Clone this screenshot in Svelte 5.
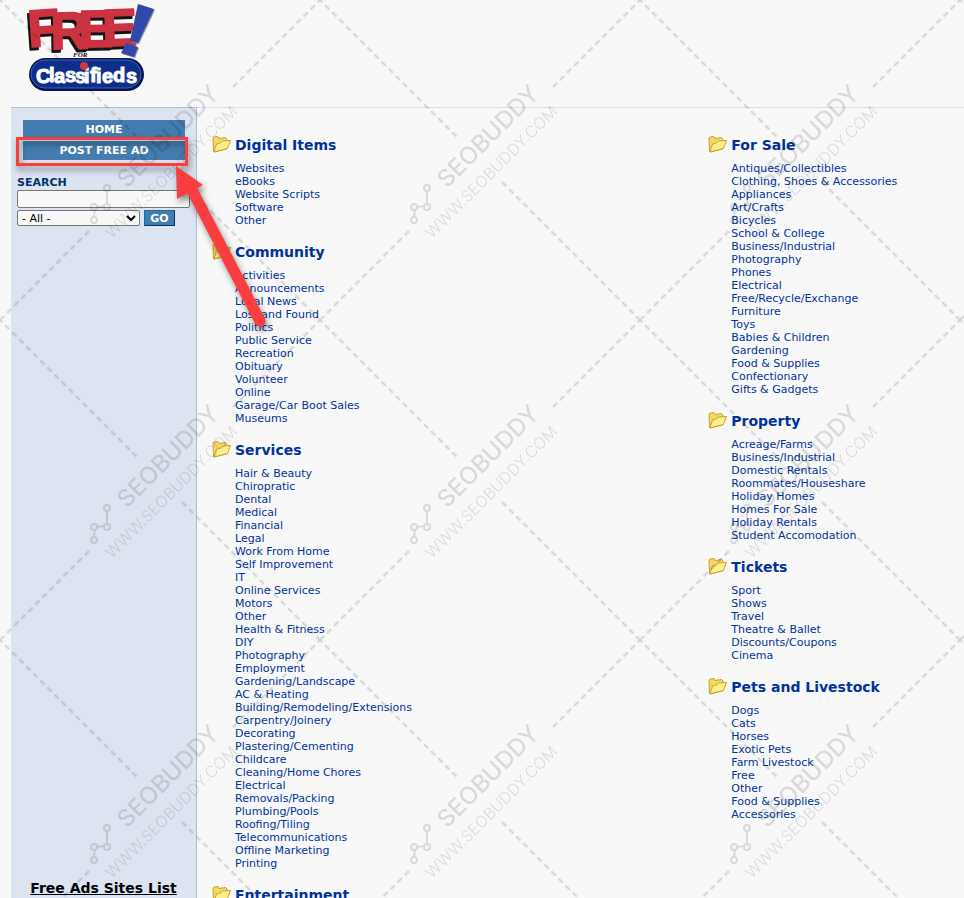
<script>
  const left = [
    { title: 'Digital Items', items: ['Websites', 'eBooks', 'Website Scripts', 'Software', 'Other'] },
    { title: 'Community', items: ['Activities', 'Announcements', 'Local News', 'Lost and Found', 'Politics', 'Public Service', 'Recreation', 'Obituary', 'Volunteer', 'Online', 'Garage/Car Boot Sales', 'Museums'] },
    { title: 'Services', items: ['Hair & Beauty', 'Chiropratic', 'Dental', 'Medical', 'Financial', 'Legal', 'Work From Home', 'Self Improvement', 'IT', 'Online Services', 'Motors', 'Other', 'Health & Fitness', 'DIY', 'Photography', 'Employment', 'Gardening/Landscape', 'AC & Heating', 'Building/Remodeling/Extensions', 'Carpentry/Joinery', 'Decorating', 'Plastering/Cementing', 'Childcare', 'Cleaning/Home Chores', 'Electrical', 'Removals/Packing', 'Plumbing/Pools', 'Roofing/Tiling', 'Telecommunications', 'Offline Marketing', 'Printing'] },
    { title: 'Entertainment', items: [] },
  ];
  const right = [
    { title: 'For Sale', items: ['Antiques/Collectibles', 'Clothing, Shoes & Accessories', 'Appliances', 'Art/Crafts', 'Bicycles', 'School & College', 'Business/Industrial', 'Photography', 'Phones', 'Electrical', 'Free/Recycle/Exchange', 'Furniture', 'Toys', 'Babies & Children', 'Gardening', 'Food & Supplies', 'Confectionary', 'Gifts & Gadgets'] },
    { title: 'Property', items: ['Acreage/Farms', 'Business/Industrial', 'Domestic Rentals', 'Roommates/Houseshare', 'Holiday Homes', 'Homes For Sale', 'Holiday Rentals', 'Student Accomodation'] },
    { title: 'Tickets', items: ['Sport', 'Shows', 'Travel', 'Theatre & Ballet', 'Discounts/Coupons', 'Cinema'] },
    { title: 'Pets and Livestock', items: ['Dogs', 'Cats', 'Horses', 'Exotic Pets', 'Farm Livestock', 'Free', 'Other', 'Food & Supplies', 'Accessories'] },
  ];
  const columns = [left, right];
</script>

<div class="page">
  <header>
    <a class="logo" href="#home" aria-label="Free for Classifieds">
      <svg width="136" height="96" viewBox="20 0 136 96">
        <text class="free" x="29 51 79 103" y="47 49 47 46" rotate="-4 -1 -1 -2">FREE</text>
        <g class="bang" fill="#3049a8">
          <path d="M138 4L154 9L138 43L130 41Z" />
          <path d="M126 43L138 47L134 57L121 53Z" />
        </g>
        <text class="for" x="73" y="57">FOR</text>
        <rect x="29" y="58" width="115" height="33" rx="16.5" fill="#0a1550" />
        <rect x="31" y="60" width="110" height="28" rx="14" fill="#0c2f8c" stroke="#3c62b4" />
        <text class="classifieds" x="36 49 54 65 75 84 90 96 102 113 126" y="83 82 83 82 83 83 82 83 83 82 83">Classifieds</text>
        <circle cx="84" cy="66" r="4" fill="#d0383e" />
      </svg>
    </a>
  </header>

  <div class="body">
    <aside>
      <nav>
        <a href="#home">HOME</a>
        <a href="#post">POST FREE AD</a>
      </nav>
      <form onsubmit={(e) => e.preventDefault()}>
        <label for="q">SEARCH</label>
        <input id="q" type="text" />
        <div class="row">
          <select aria-label="Category"><option>- All -</option></select>
          <button>GO</button>
        </div>
      </form>
      <a class="sites" href="#sites">Free Ads Sites List</a>
    </aside>

    <main>
      {#each columns as column}
        <div class="column">
          {#each column as group}
            <section>
              <svg class="folder" width="19" height="17" viewBox="0 0 19 17" aria-hidden="true">
                <path d="M1.500 15.500L1 2L2 1L6 .5L7 2.500L13.500 1.500L15 3L14.500 13L2 16Z" fill="#f3d766" stroke="#cfa02c" />
                <path d="M2 16L4.500 8L8.500 7L10.500 5L18.500 4.500L15.500 12.500Z" fill="#fcf08e" stroke="#cfa02c" stroke-linejoin="round" />
              </svg>
              <h2><a href="#category">{group.title}</a></h2>
              {#if group.items.length}
                <ul>
                  {#each group.items as item}
                    <li><a href="#category">{item}</a></li>
                  {/each}
                </ul>
              {/if}
            </section>
          {/each}
        </div>
      {/each}
    </main>
  </div>

  <svg class="watermark" aria-hidden="true">
    <defs>
      <pattern id="mark" width="320" height="320" patternUnits="userSpaceOnUse">
        <g fill="none" stroke="#000" stroke-width="2">
          <path stroke-width="2.500" stroke-dasharray="6 4" d="M-2 -2L138 138M182 182L322 322M322 -2L231 89M89 231L-2 322" />
          <path d="M94 217L95 209M97 207L104 206M107 204V192" />
          <circle cx="94" cy="220" r="3" />
          <circle cx="94" cy="207" r="3" />
          <circle cx="107" cy="207" r="3" />
          <circle cx="107" cy="188" r="3" />
        </g>
        <text class="big" transform="translate(127 189) rotate(-45)">SEOBUDDY</text>
        <text class="small" transform="translate(112 239) rotate(-45)">WWW.SEOBUDDY.COM</text>
      </pattern>
    </defs>
    <rect width="100%" height="100%" fill="url(#mark)" />
  </svg>

  <svg class="callout" width="270" height="220" viewBox="10 125 270 220" aria-hidden="true">
    <rect x="17.500" y="138.500" width="169" height="26" fill="none" stroke="#f93e40" stroke-width="3" />
    <path d="M191 188L260 321" stroke="#f93e40" stroke-width="11" stroke-linecap="round" />
    <path d="M176 166L203 185L177 199Z" fill="#f93e40" />
  </svg>
</div>

<style>
  :global(body) { margin: 0; background: #f8f8f8; }
  .page {
    position: relative;
    display: flex;
    flex-direction: column;
    height: 100vh;
    overflow: hidden;
    box-sizing: border-box;
    padding-left: 11px;
    font-family: "DejaVu Sans", Verdana, sans-serif;
    font-size: 11px;
    line-height: 13px;
    color: #003399;
  }
  a { color: inherit; text-decoration: none; }
  header { height: 107px; flex: none; padding-left: 9px; }
  .logo svg { display: block; }
  .free { font: bold 52px "Liberation Sans Narrow", "Liberation Sans", sans-serif; fill: #cb3340; stroke: #cb3340; stroke-width: 2px; stroke-linejoin: round; filter: drop-shadow(-2px 3px 0 #151515); }
  .bang { filter: drop-shadow(1px 1px 0 #8a8fa5); }
  .for { font: italic bold 7px "Liberation Serif", serif; fill: #111; }
  .classifieds { font: bold 20px "Liberation Sans", sans-serif; fill: #fff; stroke: #fff; stroke-width: 1px; }
  .body { flex: 1; min-height: 0; display: flex; }
  aside {
    flex: none;
    width: 186px;
    box-sizing: border-box;
    display: flex;
    flex-direction: column;
    padding: 12px 6px 1px;
    background: #dde4f1;
    border-top: 1px solid #a9bfdf;
    border-right: 1px solid #a9bfdf;
  }
  nav { display: flex; flex-direction: column; gap: 2px; padding: 0 5px 0 6px; }
  nav a { background: #437daf; color: #fff; font-weight: bold; text-align: center; line-height: 20px; height: 19px; }
  form { margin-top: 16px; }
  label { display: block; font-weight: bold; color: #003366; line-height: 14px; }
  input { display: block; box-sizing: border-box; width: 173px; height: 18px; border: 1px solid #767676; border-radius: 2px; background: #f8f8f8; }
  .row { display: flex; gap: 4px; margin-top: 2px; }
  select { box-sizing: border-box; width: 123px; height: 16px; padding: 0; border: 1px solid #767676; border-radius: 2px; background: #f8f8f8; font: 11px/13px "DejaVu Sans", sans-serif; color: #000; }
  button { width: 31px; height: 16px; padding: 0; border: 1px solid; border-color: #1a6a9f #04365c #04365c #1a6a9f; background: #437daf; color: #fff; font: bold 11px/13px "DejaVu Sans", sans-serif; }
  .sites { margin-top: auto; text-align: center; font-size: 14px; line-height: 17px; font-weight: bold; color: #000; text-decoration: underline; }
  main { flex: 1; min-width: 0; display: grid; grid-template-columns: 66% 34%; padding: 28px 0 0 15px; border-top: 1px solid #dcdfe6; }
  section { display: grid; grid-template-columns: 19px 1fr; column-gap: 4px; row-gap: 7px; margin-bottom: 16px; }
  h2 { margin: 0; font-size: 14px; line-height: 19px; }
  ul { grid-column: 2; margin: 0; padding: 0; list-style: none; }
  .watermark { position: absolute; inset: 0; width: 100%; height: 100%; opacity: .12; pointer-events: none; }
  .big { font: 500 24px Inter, sans-serif; }
  .small { font: 300 16px Inter, sans-serif; }
  .callout { position: absolute; left: 10px; top: 125px; pointer-events: none; filter: drop-shadow(2px 4px 3px rgba(0, 0, 0, .45)); }
</style>
